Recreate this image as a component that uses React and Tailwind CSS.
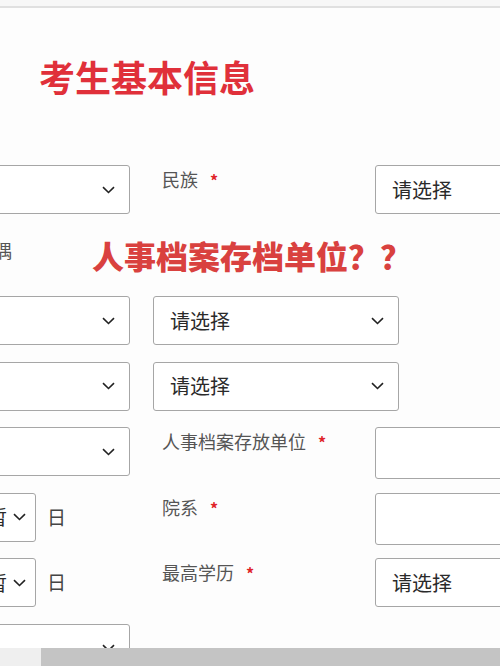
const cjk = { fontFamily: '"Noto Sans CJK SC", "Noto Sans", sans-serif' };

function Chevron() {
  return (
    <svg width="13" height="8" viewBox="0 0 13 8" className="shrink-0">
      <path d="M1 1.2 L6.5 6.5 L12 1.2" fill="none" stroke="#222" strokeWidth="1.6" />
    </svg>
  );
}

function Select({ className = '', text, chevron = true, pr = 'pr-[14px]' }) {
  return (
    <div
      className={`h-[49px] shrink-0 border border-[#a6a6a6] rounded-[3px] bg-white flex items-center justify-between ${pr} ${className}`}
    >
      <span className="text-[20px] text-[#2a2a2a] leading-none">{text}</span>
      {chevron && <Chevron />}
    </div>
  );
}

function Label({ text }) {
  return (
    <div className="ml-[32px] w-[213px] shrink-0 self-start pt-[1px] text-[18px] leading-[26px] text-[#555]">
      {text}
      <span className="ml-[12px] text-[#e0242a] text-[16px] font-bold">*</span>
    </div>
  );
}

function Input() {
  return <div className="h-[52px] w-[140px] shrink-0 border border-[#a6a6a6] rounded-[3px] bg-white" />;
}

// left column: 130px wide, content runs off the left edge
function LeftSelect() {
  return (
    <div className="w-[130px] shrink-0 flex">
      <Select className="-ml-[20px] w-[150px]" />
    </div>
  );
}

function LeftDay() {
  return (
    <div className="w-[130px] shrink-0 flex">
      <Select className="-ml-[40px] w-[76px] pl-[26px]" text="暂" pr="pr-[9px]" />
      <span className="ml-[11px] self-center text-[19px] text-[#444]">日</span>
    </div>
  );
}

export default function App() {
  return (
    <div className="w-[500px] h-[666px] flex flex-col bg-[#fdfdfd] overflow-hidden" style={cjk}>
      <div className="h-[8px] bg-[#f7f7f7] border-b-2 border-[#e0e0e0] shrink-0" />
      <div className="flex-1 overflow-hidden">
        <h1 className="pl-[39px] mt-[50px] text-[36px] leading-none font-bold text-[#e0303a]">
          考生基本信息
        </h1>

        <div className="mt-[71px] flex flex-col gap-[16.5px]">
          <div className="flex h-[49px]">
            <LeftSelect />
            <Label text="民族" />
            <Select className="w-[140px] pl-[16px]" text="请选择" chevron={false} />
          </div>

          <div className="flex h-[49px] items-center">
            <span className="-ml-[6px] w-[24px] text-[18px] text-[#555] -mt-[9px]">偶</span>
            <span className="ml-[74px] text-[32px] font-black text-[#d9413f] leading-none">
              人事档案存档单位？？
            </span>
          </div>

          <div className="flex h-[49px]">
            <LeftSelect />
            <Select className="ml-[23px] w-[246px] pl-[16px]" text="请选择" />
          </div>

          <div className="flex h-[49px]">
            <LeftSelect />
            <Select className="ml-[23px] w-[246px] pl-[16px]" text="请选择" />
          </div>

          <div className="flex h-[49px]">
            <LeftSelect />
            <Label text="人事档案存放单位" />
            <Input />
          </div>

          <div className="flex h-[49px]">
            <LeftDay />
            <Label text="院系" />
            <Input />
          </div>

          <div className="flex h-[49px]">
            <LeftDay />
            <Label text="最高学历" />
            <Select className="w-[140px] pl-[16px]" text="请选择" chevron={false} />
          </div>

          <div className="flex h-[49px]">
            <LeftSelect />
          </div>
        </div>
      </div>
      <div className="h-[18px] shrink-0 flex">
        <div className="w-[41px] bg-[#efefef]" />
        <div className="flex-1 bg-[#c4c4c4]" />
      </div>
    </div>
  );
}
